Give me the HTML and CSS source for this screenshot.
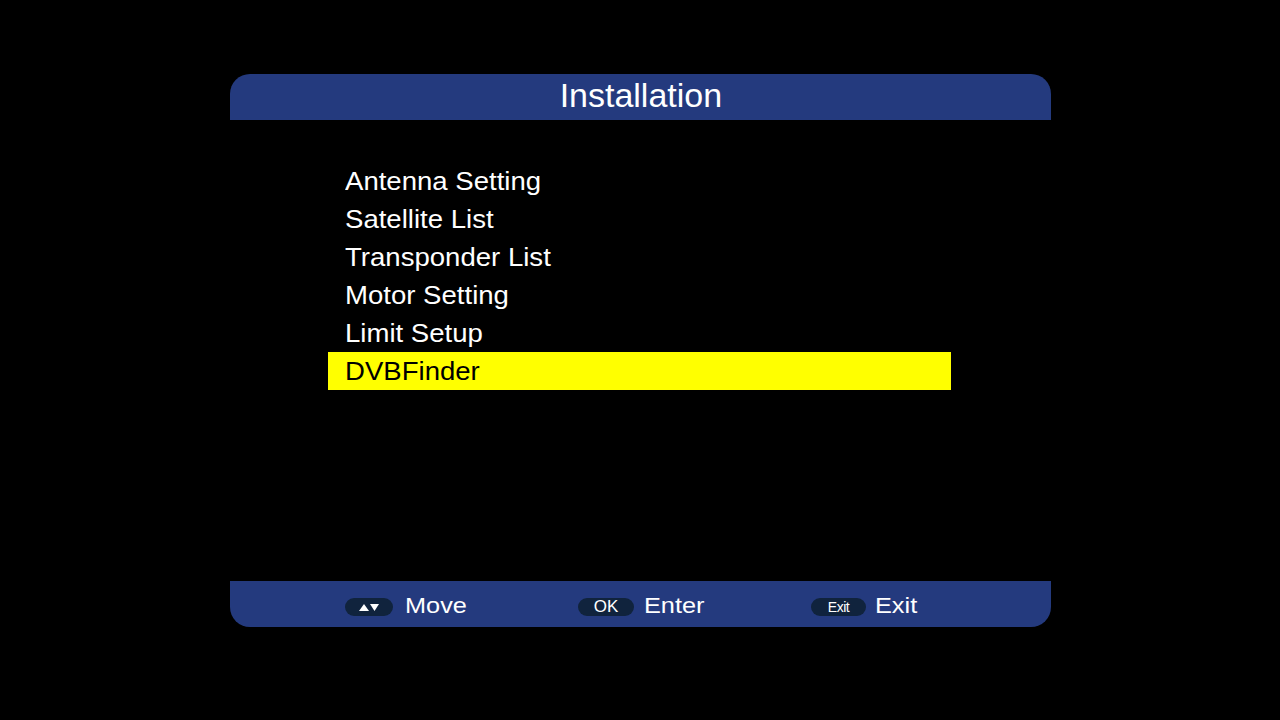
FILE: index.html
```html
<!DOCTYPE html>
<html lang="en">
<head>
  <meta charset="UTF-8" />
  <title>Installation</title>
  <link rel="stylesheet" href="styles.css">
</head>
<body>
  <div class="panel">
    <div class="panel-head">
      <span class="title">Installation</span>
    </div>

    <div class="panel-body">
      <ul class="menu">
        <li><span>Antenna Setting</span></li>
        <li><span>Satellite List</span></li>
        <li><span>Transponder List</span></li>
        <li><span>Motor Setting</span></li>
        <li><span>Limit Setup</span></li>
        <li class="active"><span>DVBFinder</span></li>
      </ul>
    </div>

    <div class="panel-foot">
      <div class="hint">
        <span class="key key-arrows">
          <svg width="22" height="10" viewBox="0 0 22 10">
            <polygon points="1,9 6,2 11,9" fill="#fff" />
            <polygon points="12,2 21,2 16.5,9" fill="#fff" />
          </svg>
        </span>
        <span class="hint-label">Move</span>
      </div>
      <div class="hint">
        <span class="key key-ok">OK</span>
        <span class="hint-label">Enter</span>
      </div>
      <div class="hint">
        <span class="key key-exit">Exit</span>
        <span class="hint-label">Exit</span>
      </div>
    </div>
  </div>
</body>
</html>
```

FILE: styles.css
```css
body {
  margin: 0;
  padding: 0;
  background: #000;
  font-family: 'Liberation Sans', Arial, sans-serif;
  color: #fff;
}

.panel {
  width: 821px;
  margin: 74px 0 0 230px;
}

.panel-head {
  height: 46px;
  line-height: 44px;
  background: #243a7e;
  border-radius: 20px 20px 0 0;
  text-align: center;
}

.title {
  display: inline-block;
  font-size: 33px;
  transform: scaleX(1.03);
}

.panel-body {
  height: 419px;
  padding-top: 42px;
}

.menu {
  list-style: none;
  margin: 0 0 0 98px;
  padding: 0;
  width: 623px;
}

.menu li {
  height: 38px;
  line-height: 38px;
  padding-left: 17px;
  font-size: 26px;
}

.menu li span {
  display: inline-block;
  transform: scaleX(1.06);
  transform-origin: left;
}

.menu li.active {
  background: #ffff00;
  color: #000;
}

.panel-foot {
  height: 46px;
  background: #243a7e;
  border-radius: 0 0 20px 20px;
  display: flex;
  padding-left: 115px;
}

.hint {
  width: 233px;
  display: flex;
  align-items: center;
}

.key {
  height: 18px;
  margin-top: 6px;
  border-radius: 9px;
  background: #10233d;
  display: flex;
  align-items: center;
  justify-content: center;
  color: #fff;
}

.key-arrows {
  width: 48px;
}

.key-ok {
  width: 56px;
  font-size: 17px;
  margin-right: -2px;
}

.key-exit {
  width: 55px;
  font-size: 14px;
  letter-spacing: -0.5px;
  margin-right: -3px;
}

.hint-label {
  display: inline-block;
  margin-left: 12px;
  margin-top: 3px;
  font-size: 22px;
  line-height: 46px;
  transform: scaleX(1.15);
  transform-origin: left;
}
```
